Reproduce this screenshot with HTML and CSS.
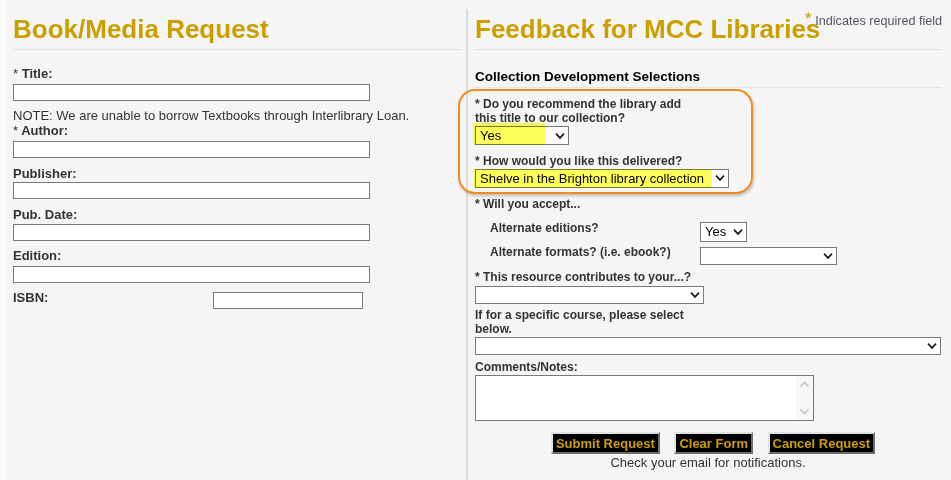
FILE: index.html
```html
<!DOCTYPE html>
<html lang="en">
<head>
<meta charset="utf-8">
<title>Book/Media Request</title>
<link rel="stylesheet" href="styles.css">
</head>
<body>
<div class="page">
  <section class="left">
    <h1 class="heading">Book/Media Request</h1>
    <label class="lbl lbl-title"><span class="req">*</span> Title:</label>
    <input class="txt txt-long m3" type="text">
    <p class="note">NOTE: We are unable to borrow Textbooks through Interlibrary Loan.</p>
    <label class="lbl"><span class="req">*</span> Author:</label>
    <input class="txt txt-long m3" type="text">
    <label class="lbl m8">Publisher:</label>
    <input class="txt txt-long m1" type="text">
    <label class="lbl m8">Pub. Date:</label>
    <input class="txt txt-long m2" type="text">
    <label class="lbl m7">Edition:</label>
    <input class="txt txt-long m3" type="text">
    <div class="isbn-row">
      <label class="lbl isbn-lbl">ISBN:</label>
      <input class="txt txt-isbn" type="text">
    </div>
  </section>

  <section class="right">
    <div class="req-note"><span class="req-star">*</span> Indicates required field</div>
    <h1 class="heading">Feedback for MCC Libraries</h1>
    <h2 class="subhead">Collection Development Selections</h2>

    <div class="annot"></div>

    <label class="rlbl wrap g1">* Do you recommend the library add this title to our collection?</label>
    <span class="sel sel-yes">
      <select><option>Yes</option></select>
      <svg class="chev" viewBox="0 0 10 7" width="10" height="7"><path d="M1 1.2 L5 5.4 L9 1.2"/></svg>
      <span class="hl hl1"></span>
    </span>

    <label class="rlbl g2">* How would you like this delivered?</label>
    <span class="sel sel-deliver">
      <select><option>Shelve in the Brighton library collection</option></select>
      <svg class="chev" viewBox="0 0 10 7" width="10" height="7"><path d="M1 1.2 L5 5.4 L9 1.2"/></svg>
      <span class="hl hl2"></span>
    </span>

    <label class="rlbl g3">* Will you accept...</label>
    <div class="accept">
      <div class="arow">
        <span class="rlbl alabel">Alternate editions?</span>
        <span class="sel sel-small">
          <select><option>Yes</option></select>
          <svg class="chev" viewBox="0 0 10 7" width="10" height="7"><path d="M1 1.2 L5 5.4 L9 1.2"/></svg>
        </span>
      </div>
      <div class="arow arow2">
        <span class="rlbl alabel">Alternate formats? (i.e. ebook?)</span>
        <span class="sel sel-formats">
          <select><option></option></select>
          <svg class="chev" viewBox="0 0 10 7" width="10" height="7"><path d="M1 1.2 L5 5.4 L9 1.2"/></svg>
        </span>
      </div>
    </div>

    <label class="rlbl g4">* This resource contributes to your...?</label>
    <span class="sel sel-contrib">
      <select><option></option></select>
      <svg class="chev" viewBox="0 0 10 7" width="10" height="7"><path d="M1 1.2 L5 5.4 L9 1.2"/></svg>
    </span>

    <label class="rlbl wrap g4">If for a specific course, please select below.</label>
    <span class="sel sel-course">
      <select><option></option></select>
      <svg class="chev" viewBox="0 0 10 7" width="10" height="7"><path d="M1 1.2 L5 5.4 L9 1.2"/></svg>
    </span>

    <label class="rlbl g4">Comments/Notes:</label>
    <div class="ta">
      <textarea></textarea>
      <div class="sb">
        <svg class="sb-arrow" viewBox="0 0 17 17" width="17" height="17"><path d="M4.5 10.5 L8.5 6.5 L12.5 10.5"/></svg>
        <svg class="sb-arrow" viewBox="0 0 17 17" width="17" height="17"><path d="M4.5 6.5 L8.5 10.5 L12.5 6.5"/></svg>
      </div>
    </div>

    <div class="buttons">
      <button class="btn" type="button">Submit Request</button>
      <button class="btn" type="button">Clear Form</button>
      <button class="btn" type="button">Cancel Request</button>
    </div>
    <p class="check">Check your email for notifications.</p>
  </section>
</div>
</body>
</html>
```

FILE: styles.css
```css
html, body {
  margin: 0;
  padding: 0;
}
body {
  background: #fafafa;
  font-family: "Liberation Sans", Arial, sans-serif;
  color: #333;
}
.page {
  margin-left: 6px;
  min-height: 480px;
  background: #f5f5f5;
  display: flex;
  align-items: stretch;
}

/* ---------- shared ---------- */
.heading {
  align-self: stretch;
  margin: 0;
  font-size: 26px;
  line-height: 30px;
  font-weight: 700;
  color: #cc9f00;
  padding-bottom: 5px;
  border-bottom: 1px solid #e4e4e4;
  white-space: nowrap;
}
.req { font-weight: 400; }

/* ---------- left column ---------- */
.left {
  width: 460px;
  box-sizing: border-box;
  padding: 14px 5px 0 7px;
  display: flex;
  flex-direction: column;
  align-items: flex-start;
}
.lbl {
  display: block;
  font-size: 13px;
  line-height: 15px;
  font-weight: 700;
  color: #333;
}
.lbl-title { margin-top: 16px; }
.txt {
  display: block;
  box-sizing: border-box;
  height: 17px;
  border: 1px solid #7a7a7a;
  background: #fff;
  margin: 0;
  padding: 0 3px;
  font: 13px "Liberation Sans", Arial, sans-serif;
}
.txt-long { width: 357px; }
.m1 { margin-top: 1px; }
.m2 { margin-top: 2px; }
.m3 { margin-top: 3px; }
.m7 { margin-top: 7px; }
.m8 { margin-top: 8px; }
.note {
  margin: 7px 0 0;
  font-size: 13px;
  line-height: 15px;
  color: #333;
}
.isbn-row {
  margin-top: 7px;
  display: flex;
  align-items: flex-start;
}
.isbn-lbl { width: 200px; }
.txt-isbn {
  width: 150px;
  margin-top: 2px;
}

/* ---------- right column ---------- */
.right {
  flex: 1;
  margin-top: 9px;
  border-left: 2px solid #dcdcdc;
  padding: 5px 10px 0 7px;
  position: relative;
  display: flex;
  flex-direction: column;
  align-items: flex-start;
}
.req-note {
  position: absolute;
  top: 3px;
  right: 9px;
  font-size: 12.6px;
  line-height: 15px;
  color: #525660;
  white-space: nowrap;
}
.req-star {
  font-size: 18px;
  color: #cc9f00;
}
.subhead {
  align-self: stretch;
  margin: 19px 0 0;
  font-size: 13.5px;
  line-height: 16px;
  font-weight: 700;
  color: #000;
  padding-bottom: 2px;
  border-bottom: 1px solid #e4e4e4;
}
.annot {
  position: absolute;
  left: -10px;
  top: 80px;
  width: 295px;
  height: 105px;
  box-sizing: border-box;
  border: 2px solid #f28a22;
  border-radius: 17px;
  box-shadow: 1px 2px 3px rgba(0, 0, 0, 0.22);
  pointer-events: none;
}
.rlbl {
  display: block;
  font-size: 12px;
  line-height: 13.5px;
  font-weight: 700;
  color: #333;
}
.wrap { width: 225px; }
.g1 { margin-top: 10px; }
.g2 { margin-top: 10px; }
.g3 { margin-top: 10.5px; }
.g4 { margin-top: 5.5px; }

.sel {
  display: block;
  position: relative;
  box-sizing: border-box;
}
.sel select {
  display: block;
  width: 100%;
  height: 100%;
  box-sizing: border-box;
  -webkit-appearance: none;
  appearance: none;
  border: 1px solid #7a7a7a;
  border-radius: 0;
  background: #fff;
  margin: 0;
  padding: 0 18px 0 4px;
  font: 13px "Liberation Sans", Arial, sans-serif;
  color: #000;
}
.chev {
  position: absolute;
  right: 4px;
  top: 50%;
  transform: translateY(-50%);
  pointer-events: none;
}
.chev path {
  fill: none;
  stroke: #1a1a1a;
  stroke-width: 1.7;
}
.hl {
  position: absolute;
  background: #ffff5c;
  mix-blend-mode: multiply;
  pointer-events: none;
}
.hl1 { left: -2px; top: -3px; width: 72px; bottom: 0; }
.hl2 { left: -1px; top: 0; width: 238px; bottom: 0; }

.sel-yes { width: 94px; height: 19px; margin-top: 1px; }
.sel-deliver { width: 254px; height: 19px; }
.sel-small { width: 47px; height: 19.5px; }
.sel-formats { width: 137px; height: 18px; margin-top: 1.5px; }
.sel-contrib { width: 229px; height: 18px; margin-top: 1.5px; }
.sel-course { align-self: stretch; height: 18px; margin-top: 1.3px; }

.accept {
  margin-top: 10.5px;
  padding-left: 15px;
  display: flex;
  flex-direction: column;
}
.arow {
  display: flex;
  align-items: flex-start;
}
.arow2 { margin-top: 4px; }
.alabel { width: 210px; }

.ta {
  margin-top: 1px;
  width: 339px;
  height: 46px;
  box-sizing: border-box;
  border: 1px solid #7a7a7a;
  background: #fff;
  display: flex;
}
.ta textarea {
  flex: 1;
  border: 0;
  margin: 0;
  padding: 2px;
  resize: none;
  outline: none;
  background: #fff;
  font: 13px "Liberation Sans", Arial, sans-serif;
}
.sb {
  width: 17px;
  background: #f7f7f7;
  display: flex;
  flex-direction: column;
  justify-content: space-between;
}
.sb-arrow { display: block; }
.sb-arrow path {
  fill: none;
  stroke: #c3c3c3;
  stroke-width: 1.6;
}

.buttons {
  align-self: stretch;
  margin-top: 10.7px;
  padding-left: 10px;
  display: flex;
  justify-content: center;
  gap: 14.5px;
}
.btn {
  height: 22.3px;
  box-sizing: border-box;
  margin: 0;
  padding: 0 3px;
  background: #000;
  color: #cc9f00;
  font: 700 13px/17px "Liberation Sans", Arial, sans-serif;
  border: 2px solid;
  border-color: #e2e2e2 #6e6e6e #6e6e6e #e2e2e2;
  border-radius: 0;
  white-space: nowrap;
}
.check {
  align-self: stretch;
  margin: 1px 0 0;
  text-align: center;
  font-size: 13px;
  line-height: 15px;
  color: #333;
}
```
